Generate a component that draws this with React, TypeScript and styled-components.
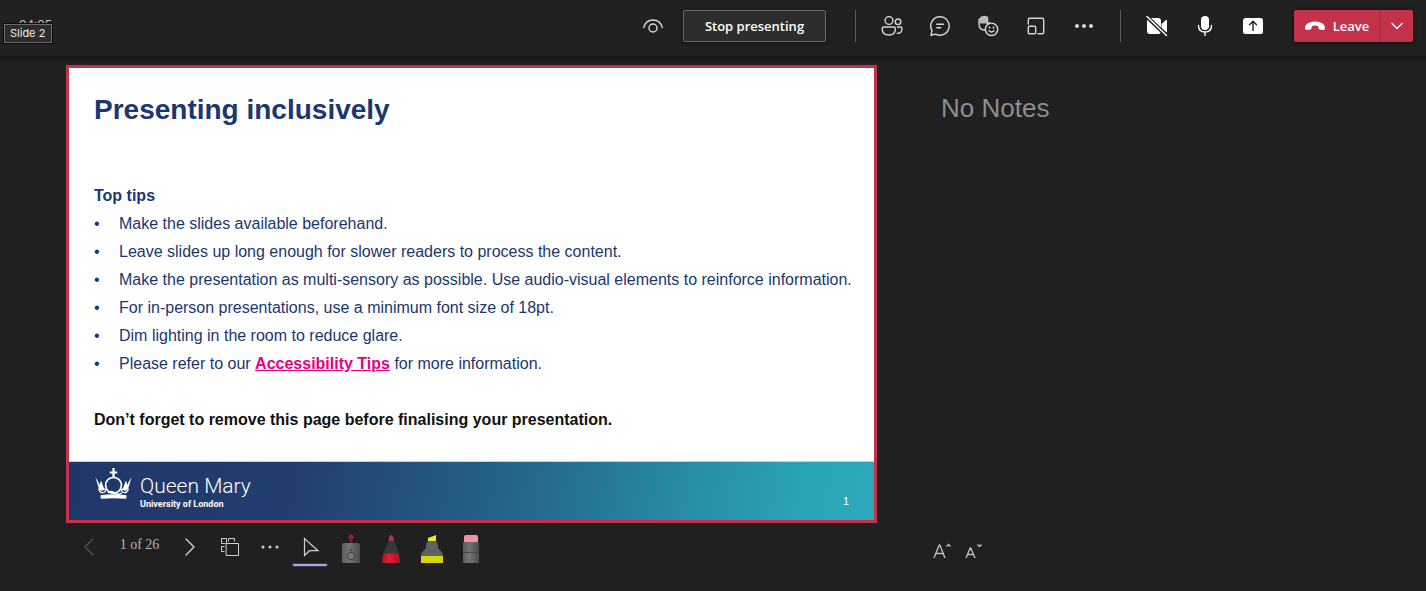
import React from "react";
import styled, { createGlobalStyle } from "styled-components";

const GlobalStyle = createGlobalStyle`
  * { box-sizing: border-box; }
  body {
    margin: 0;
    background: #202020;
    font-family: "Liberation Sans", Arial, sans-serif;
  }
  button { font: inherit; color: inherit; }
`;

const Page = styled.div`
  min-height: 100vh;
  display: flex;
  flex-direction: column;
  background: #202020;
`;

const Header = styled.header`
  height: 56px;
  padding: 10px 13px 14px 19px;
  display: flex;
  align-items: flex-start;
  justify-content: space-between;
  background: #212121;
  box-shadow: 0 1px 3px 1px #141414;
  font-family: "Open Sans", "Noto Sans", sans-serif;
  position: relative;
`;

const Timer = styled.span`
  color: #c8c8c8;
  font-size: 13px;
  line-height: 28px;
`;

const Tooltip = styled.span`
  position: absolute;
  left: 4px;
  top: 24px;
  padding: 0 6px 0 5px;
  border: 1px solid #6a6a6a;
  outline: 1px solid #0c0c0c;
  background: #2c2c2c;
  color: #ececec;
  font-family: Inter, sans-serif;
  font-size: 11px;
  line-height: 17px;
`;

const Controls = styled.div`
  display: flex;
  align-items: center;
`;

const IconButton = styled.button`
  width: 48px;
  height: 32px;
  padding: 0;
  border: 0;
  background: none;
  color: #d6d6d6;
  display: flex;
  align-items: center;
  justify-content: center;
`;

const StopButton = styled.button`
  width: 143px;
  height: 32px;
  margin: 0 29px 0 6px;
  padding: 0;
  border: 1px solid #6a6a6a;
  border-radius: 2px;
  background: #2d2d2d;
  color: #fff;
  font-size: 13px;
  font-weight: 600;
  box-shadow: 0 1px 3px #111;
`;

const Divider = styled.span`
  width: 1px;
  height: 32px;
  background: #5c5c5c;
`;

const IconGroup = styled.div<{ $end: number }>`
  display: flex;
  padding: 0 ${(p) => p.$end}px 0 12px;
`;

const LeaveGroup = styled.div`
  display: flex;
  height: 32px;
  border-radius: 2px;
  overflow: hidden;
  background: #c4314b;
  color: #fff;
  box-shadow: 0 1px 4px #0c0c0c;
`;

const LeaveButton = styled.button`
  width: 87px;
  padding: 0;
  border: 0;
  border-right: 1px solid #a52a40;
  background: none;
  display: flex;
  align-items: center;
  justify-content: center;
  gap: 8px;
  font-size: 13px;
  font-weight: 600;
`;

const LeaveMenu = styled.button`
  width: 32px;
  padding: 0;
  border: 0;
  background: none;
  display: flex;
  align-items: center;
  justify-content: center;
`;

const Main = styled.main`
  flex: 1;
  display: grid;
  grid-template-columns: 811fr 549fr;
  padding: 9px 0 0 66px;
`;

const Stage = styled.section`
  display: flex;
  flex-direction: column;
`;

const Slide = styled.article`
  border: 3px solid #c4314b;
  background: #fff;
  color: #1a3770;
  display: flex;
  flex-direction: column;
`;

const SlideBody = styled.div`
  padding: 26px 16px 27px 25px;
  font-size: 16px;
  line-height: 28px;
`;

const Title = styled.h1`
  margin: 0 0 56px;
  font-size: 28px;
  line-height: 32px;
`;

const Subtitle = styled.h2`
  margin: 0;
  font-size: inherit;
`;

const Tips = styled.ul`
  margin: 0 0 28px;
  padding: 0;
  list-style: none;
`;

const Tip = styled.li`
  display: flex;
  &::before {
    content: "•";
    flex: none;
    width: 25px;
  }
`;

const TipLink = styled.a`
  color: #e6007e;
  font-weight: 700;
  text-decoration: underline;
`;

const Reminder = styled.p`
  margin: 0;
  color: #111;
  font-weight: 700;
`;

const SlideFooter = styled.footer`
  height: 59px;
  padding: 6px 25px 0 26px;
  display: flex;
  justify-content: space-between;
  color: #fff;
  background: linear-gradient(100deg, #203668 0%, #223e70 28%, #245d84 50%, #267697 65%, #288ea8 77%, #2aa4b7 91%, #2ba9bb 100%);
  border-top: 1px solid #c5cfe0;
`;

const Brand = styled.div`
  display: flex;
  gap: 8px;
`;

const BrandText = styled.div`
  display: flex;
  flex-direction: column;
  padding-top: 5px;
`;

const BrandName = styled.span`
  font-family: Roboto, sans-serif;
  font-weight: 300;
  font-size: 21px;
  line-height: 26px;
`;

const BrandSub = styled.span`
  font-family: Roboto, "Liberation Sans", sans-serif;
  font-weight: 700;
  font-size: 9px;
  line-height: 10px;
`;

const SlideNumber = styled.span`
  padding-top: 27px;
  font-size: 11px;
  line-height: 12px;
`;

const Toolbar = styled.nav`
  display: flex;
  height: 56px;
  padding-left: 3px;
  color: #d0d0d0;
`;

const ToolButton = styled.button<{ $dim?: boolean }>`
  width: 40px;
  height: 48px;
  padding: 0;
  border: 0;
  background: none;
  display: flex;
  align-items: center;
  justify-content: center;
  color: ${(p) => (p.$dim ? "#555" : "#d0d0d0")};
`;

const PageCount = styled.span`
  width: 61px;
  text-align: center;
  font-family: "Liberation Serif", serif;
  font-size: 14px;
  line-height: 44px;
  color: #b4b4b4;
`;

const Notes = styled.aside`
  display: flex;
  flex-direction: column;
  justify-content: space-between;
  padding: 27px 20px 28px 64px;
`;

const NotesText = styled.p`
  margin: 0;
  color: #8e8e8e;
  font-size: 26px;
  line-height: 32px;
`;

const FontSizes = styled.div`
  display: flex;
  margin-left: -15px;
`;

const FontButton = styled.button`
  width: 32px;
  height: 24px;
  padding: 0;
  border: 0;
  background: none;
  display: flex;
  align-items: center;
  justify-content: center;
  color: #bdbdbd;
`;

const Svg = ({ w = 20, h = 20, stroke = 1.4, children }: { w?: number; h?: number; stroke?: number; children: React.ReactNode }) => (
  <svg width={w} height={h} viewBox={`0 0 ${w} ${h}`} fill="none" stroke="currentColor" strokeWidth={stroke} strokeLinecap="round" strokeLinejoin="round" aria-hidden="true">
    {children}
  </svg>
);

const Crown = () => (
  <svg width="37" height="32" viewBox="0 0 37 32" fill="none" stroke="#fff" aria-hidden="true">
    <path d="M18.500 0v9M14.800 4.500h7.400" strokeWidth="2.200" />
    <circle cx="18.500" cy="17.300" r="7.900" strokeWidth="1.700" />
    <path d="M.3 9l3.400 5.500.8 2.500 1.600-4.500 3.300 9c-2 1.800-4.500 1.500-5.400-.5zM36.700 9l-3.400 5.500-.8 2.500-1.600-4.500-3.300 9c2 1.800 4.500 1.500 5.400-.5z" fill="#fff" stroke="none" />
    <path d="M3.600 20.500c.3 3.500 3.200 5 6 3.500 1.800-1 .8-3.500-1.300-2.800M33.400 20.500c-.3 3.500-3.200 5-6 3.500-1.800-1-.8-3.500 1.300-2.800" strokeWidth="1.300" />
    <path d="M13 25c2-2.200 4.500-1.500 6.500-.2 2.500 1.600 5 2 7 .2" strokeWidth="1.600" />
    <path d="M5.500 27.300q13-2 26 0l-.3 3.500q-12.700-1.200-25.400 0z" fill="#fff" stroke="none" />
  </svg>
);

const tips: React.ReactNode[] = [
  "Make the slides available beforehand.",
  "Leave slides up long enough for slower readers to process the content.",
  "Make the presentation as multi-sensory as possible. Use audio-visual elements to reinforce information.",
  "For in-person presentations, use a minimum font size of 18pt.",
  "Dim lighting in the room to reduce glare.",
  <>Please refer to our <TipLink href="#tips">Accessibility Tips</TipLink> for more information.</>,
];

export default function App() {
  return (
    <Page>
      <GlobalStyle />
      <Header>
        <Timer>04:05</Timer>
        <Tooltip role="tooltip">Slide 2</Tooltip>
        <Controls>
          <IconButton aria-label="Private view">
            <Svg>
              <path d="M.8 11.500C2 6.800 5.600 4 10 4s8 2.800 9.200 7.500" />
              <circle cx="10" cy="12" r="4" />
            </Svg>
          </IconButton>
          <StopButton>Stop presenting</StopButton>
          <Divider />
          <IconGroup $end={12}>
            <IconButton aria-label="People">
              <Svg w={22}>
                <circle cx="8" cy="4.500" r="3.900" />
                <circle cx="17" cy="5.800" r="2.800" />
                <path d="M3 11h9.600c1 0 1.800.8 1.800 1.800 0 4-2.500 6.200-6.600 6.200s-6.600-2.200-6.600-6.200c0-1 .8-1.800 1.800-1.800zM16.500 11h2.800c.9 0 1.700.8 1.700 1.700 0 3-1.800 4.700-4.600 4.500" />
              </Svg>
            </IconButton>
            <IconButton aria-label="Chat">
              <Svg>
                <path d="M10 .8a9.200 9.200 0 1 1-4.400 17.300L.9 19.300l1.100-4.700A9.200 9.200 0 0 1 10 .8zM6.800 8.300h6.700M6.800 11.800h4" />
              </Svg>
            </IconButton>
            <IconButton aria-label="Reactions">
              <Svg w={22} h={22}>
                <path d="M2 9V5c0-1.500 1.900-1.500 1.900 0M3.900 5V3c0-1.500 2.200-1.500 2.200 0M6.100 2.500c0-1.500 2.300-1.500 2.300 0M8.400 3c0-1.500 2.100-1.500 2.100 0v6c1-1.600 3-1.300 2.400.3-1 3.300-2.600 5.700-5.600 5.700C4 15 2 12.700 2 9" />
                <path d="M2.500 4.500h1.600l.3-1.700h1.800l.3-.8h1.800l.3.800h1.600v5.700h-7.700z" fill="#b8b8b8" stroke="none" />
                <circle cx="14.500" cy="14.300" r="6.200" fill="#212121" />
                <path d="M12 15.800q2.500 2.500 5 0" />
                <path d="M12.500 12.500v.3M16.500 12.500v.3" strokeWidth="1.800" />
              </Svg>
            </IconButton>
            <IconButton aria-label="Rooms">
              <Svg>
                <path d="M2.300 8V3.800c0-.9.6-1.500 1.500-1.500h12.400c.9 0 1.500.6 1.500 1.500v12.400c0 .9-.6 1.500-1.500 1.500H12M2.300 11.300c0-.6.4-1 1-1h5.400c.6 0 1 .4 1 1v5.400c0 .6-.4 1-1 1H3.300c-.6 0-1-.4-1-1z" />
              </Svg>
            </IconButton>
            <IconButton aria-label="More actions">
              <Svg>
                <g fill="currentColor" stroke="none"><circle cx="3" cy="10" r="2" /><circle cx="10" cy="10" r="2" /><circle cx="17" cy="10" r="2" /></g>
              </Svg>
            </IconButton>
          </IconGroup>
          <Divider />
          <IconGroup $end={17}>
            <IconButton aria-label="Turn camera on">
              <Svg w={22}>
                <g fill="#fff" stroke="none">
                  <rect x="1" y="2" width="14" height="16" rx="3" />
                  <path d="M15.500 8l4.500-4c.5-.4 1-.2 1 .4v11.200c0 .6-.5.8-1 .4l-4.500-4z" />
                </g>
                <path d="M.5 .5l20 19" stroke="#212121" strokeWidth="4" />
                <path d="M1 .5l19.500 19" stroke="#fff" />
              </Svg>
            </IconButton>
            <IconButton aria-label="Mute">
              <Svg>
                <rect x="6" y="0" width="8" height="14" rx="4" fill="#fff" stroke="none" />
                <path d="M3.500 9.500c0 4 2.600 6.500 6.500 6.500s6.500-2.500 6.500-6.500M10 16v3.500" stroke="#fff" />
              </Svg>
            </IconButton>
            <IconButton aria-label="Share content">
              <Svg>
                <rect x="0" y="2" width="20" height="16" rx="2.500" fill="#fff" stroke="none" />
                <path d="M10 14.500v-9M6.500 8.700L10 5.300l3.500 3.400" stroke="#212121" />
              </Svg>
            </IconButton>
          </IconGroup>
          <LeaveGroup>
            <LeaveButton>
              <Svg w={20} h={12}>
                <path d="M10 1.500c4 0 7.500 1.300 9 3.500 1.100 1.600 1 3 .6 4.200-.2.700-.9 1-1.600.9l-3.200-.6c-.7-.1-1.200-.6-1.300-1.300l-.3-2c-2-.8-4.400-.8-6.400 0l-.3 2c-.1.700-.6 1.200-1.300 1.300l-3.200.6c-.7.100-1.400-.2-1.600-.9C0 8 -.1 6.600 1 5c1.500-2.200 5-3.500 9-3.500z" fill="#fff" stroke="none" />
              </Svg>
              Leave
            </LeaveButton>
            <LeaveMenu aria-label="Leave options">
              <Svg w={12} h={8}><path d="M1 1.500l5 5 5-5" /></Svg>
            </LeaveMenu>
          </LeaveGroup>
        </Controls>
      </Header>
      <Main>
        <Stage>
          <Slide>
            <SlideBody>
              <Title>Presenting inclusively</Title>
              <Subtitle>Top tips</Subtitle>
              <Tips>
                {tips.map((tip, i) => <Tip key={i}><span>{tip}</span></Tip>)}
              </Tips>
              <Reminder>Don’t forget to remove this page before finalising your presentation.</Reminder>
            </SlideBody>
            <SlideFooter>
              <Brand>
                <Crown />
                <BrandText>
                  <BrandName>Queen Mary</BrandName>
                  <BrandSub>University of London</BrandSub>
                </BrandText>
              </Brand>
              <SlideNumber>1</SlideNumber>
            </SlideFooter>
          </Slide>
          <Toolbar aria-label="Slide tools">
            <ToolButton $dim aria-label="Previous slide">
              <Svg w={10} h={18} stroke={1.2}><path d="M9 1L1 9l8 8" /></Svg>
            </ToolButton>
            <PageCount>1 of 26</PageCount>
            <ToolButton aria-label="Next slide">
              <Svg w={10} h={18}><path d="M1 1l8 8-8 8" /></Svg>
            </ToolButton>
            <ToolButton aria-label="Go to slide">
              <Svg stroke={1}><path d="M6.500 6.500V1.500H1.500v5H5M8.500 4V1.500H14.500V4M4 9.500H1.500v5H4M6.500 6.500h12v12h-12z" strokeLinejoin="miter" /></Svg>
            </ToolButton>
            <ToolButton aria-label="More">
              <Svg>
                <g fill="currentColor" stroke="none"><circle cx="3" cy="10" r="1.500" /><circle cx="10" cy="10" r="1.500" /><circle cx="17" cy="10" r="1.500" /></g>
              </Svg>
            </ToolButton>
            <ToolButton aria-label="Cursor">
              <Svg w={40} h={48} stroke={1.2}>
                <path d="M14.500 15.500v17l5-4.800h8.500z" strokeLinejoin="miter" />
                <path d="M4 42h32" stroke="#6264a7" strokeWidth="4" opacity=".4" />
                <path d="M4 42h32" stroke="#a6a7dc" strokeWidth="2" />
              </Svg>
            </ToolButton>
            <ToolButton aria-label="Laser pointer">
              <svg width="40" height="48" viewBox="0 0 40 48" aria-hidden="true">
                <defs><linearGradient id="metal"><stop stopColor="#5c5c5c" /><stop offset=".4" stopColor="#747474" /><stop offset="1" stopColor="#4c4c4c" /></linearGradient></defs>
                <path d="M21 21v-7" stroke="#9b1c31" strokeWidth="1.500" />
                <circle cx="21" cy="14" r="2.600" fill="#a01b30" />
                <path d="M12 40V22q0-2 2-2h14q2 0 2 2v18z" fill="url(#metal)" />
                <circle cx="21" cy="33" r="3.600" fill="#777" stroke="#414141" />
                <circle cx="21" cy="27" r="1" fill="#3c3c3c" />
              </svg>
            </ToolButton>
            <ToolButton aria-label="Pen">
              <svg width="40" height="48" viewBox="0 0 40 48" aria-hidden="true">
                <defs><linearGradient id="red"><stop stopColor="#a51225" /><stop offset=".4" stopColor="#dc2038" /><stop offset="1" stopColor="#a51225" /></linearGradient></defs>
                <path d="M12 40q0-6 1.500-10h15q1.500 4 1.500 10z" fill="url(#red)" />
                <path d="M13.500 30.500q1.500-5.500 5.500-13.500h4.500q4 8 5.500 13.500z" fill="#383838" />
                <path d="M18.300 17.500q1.500-5.500 2.900-5.500t2.900 5.500z" fill="#d82c42" />
              </svg>
            </ToolButton>
            <ToolButton aria-label="Highlighter">
              <svg width="40" height="48" viewBox="0 0 40 48" aria-hidden="true">
                <path d="M11 40v-7h22v7z" fill="#d4d600" />
                <path d="M11 33q0-4 4.500-7l1-6q.5-2 2.500-2h6q2 0 2.500 2l1 6q4.500 3 4.500 7z" fill="#606060" />
                <path d="M18 18v-3l8-3v6z" fill="#e8ea2a" />
              </svg>
            </ToolButton>
            <ToolButton aria-label="Eraser">
              <svg width="40" height="48" viewBox="0 0 40 48" aria-hidden="true">
                <path d="M14 19v-5q0-2 2-2h10q2 0 2 2v5z" fill="#f4939f" />
                <path d="M13 19h16v21H13z" fill="url(#metal)" />
                <path d="M13 29.500h16" stroke="#484848" />
              </svg>
            </ToolButton>
          </Toolbar>
        </Stage>
        <Notes>
          <NotesText>No Notes</NotesText>
          <FontSizes>
            <FontButton aria-label="Increase text size">
              <Svg w={20} h={16}><path d="M2 15L7.200 2h.6L13 15M3.800 10.500h7.400M14.500 3.500L16.500 1.500l2 2" strokeLinecap="butt" /></Svg>
            </FontButton>
            <FontButton aria-label="Decrease text size">
              <Svg w={20} h={16}><path d="M2 15L6.200 5h.6L11 15M3.500 11.500h6M13.500 1.500l2 2 2-2" strokeLinecap="butt" /></Svg>
            </FontButton>
          </FontSizes>
        </Notes>
      </Main>
    </Page>
  );
}
